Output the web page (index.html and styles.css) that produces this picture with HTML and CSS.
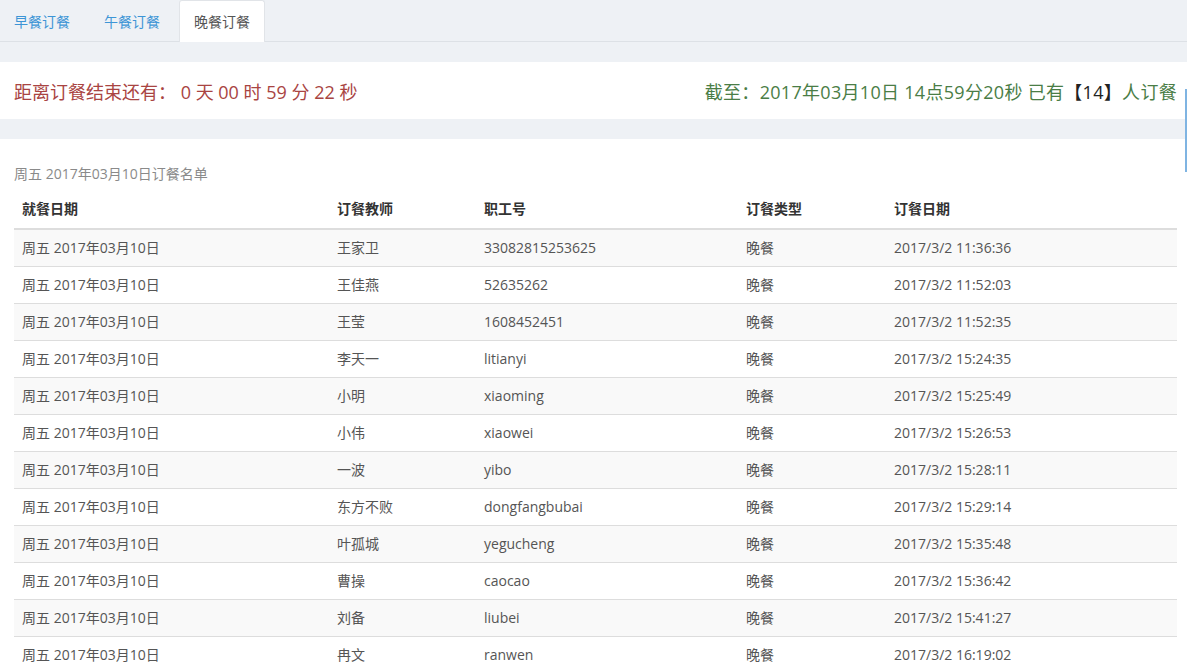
FILE: index.html
```html
<!DOCTYPE html>
<html lang="zh-CN">
<head>
<meta charset="utf-8">
<title>订餐名单</title>
<link rel="stylesheet" href="styles.css">
</head>
<body>
<ul class="tabs">
  <li class="tab"><a href="#">早餐订餐</a></li>
  <li class="tab"><a href="#">午餐订餐</a></li>
  <li class="tab active"><a href="#">晚餐订餐</a></li>
</ul>
<div class="countdown">
  <div class="remain">距离订餐结束还有： 0 天 00 时 59 分 22 秒</div>
  <div class="status">截至：2017年03月10日 14点59分20秒 已有<span class="count">【14】</span>人订餐</div>
</div>
<div class="panel">
  <div class="caption">周五 2017年03月10日订餐名单</div>
  <table class="list">
    <thead>
      <tr><th class="c1">就餐日期</th><th class="c2">订餐教师</th><th class="c3">职工号</th><th class="c4">订餐类型</th><th class="c5">订餐日期</th></tr>
    </thead>
    <tbody>
      <tr><td>周五 2017年03月10日</td><td>王家卫</td><td>33082815253625</td><td>晚餐</td><td>2017/3/2 11:36:36</td></tr>
      <tr><td>周五 2017年03月10日</td><td>王佳燕</td><td>52635262</td><td>晚餐</td><td>2017/3/2 11:52:03</td></tr>
      <tr><td>周五 2017年03月10日</td><td>王莹</td><td>1608452451</td><td>晚餐</td><td>2017/3/2 11:52:35</td></tr>
      <tr><td>周五 2017年03月10日</td><td>李天一</td><td>litianyi</td><td>晚餐</td><td>2017/3/2 15:24:35</td></tr>
      <tr><td>周五 2017年03月10日</td><td>小明</td><td>xiaoming</td><td>晚餐</td><td>2017/3/2 15:25:49</td></tr>
      <tr><td>周五 2017年03月10日</td><td>小伟</td><td>xiaowei</td><td>晚餐</td><td>2017/3/2 15:26:53</td></tr>
      <tr><td>周五 2017年03月10日</td><td>一波</td><td>yibo</td><td>晚餐</td><td>2017/3/2 15:28:11</td></tr>
      <tr><td>周五 2017年03月10日</td><td>东方不败</td><td>dongfangbubai</td><td>晚餐</td><td>2017/3/2 15:29:14</td></tr>
      <tr><td>周五 2017年03月10日</td><td>叶孤城</td><td>yegucheng</td><td>晚餐</td><td>2017/3/2 15:35:48</td></tr>
      <tr><td>周五 2017年03月10日</td><td>曹操</td><td>caocao</td><td>晚餐</td><td>2017/3/2 15:36:42</td></tr>
      <tr><td>周五 2017年03月10日</td><td>刘备</td><td>liubei</td><td>晚餐</td><td>2017/3/2 15:41:27</td></tr>
      <tr><td>周五 2017年03月10日</td><td>冉文</td><td>ranwen</td><td>晚餐</td><td>2017/3/2 16:19:02</td></tr>
    </tbody>
  </table>
</div>
<div class="edge-bar"></div>
</body>
</html>
```
FILE: styles.css
```css
html, body {
  margin: 0;
  padding: 0;
}
body {
  background: #eef1f5;
  font-family: "Open Sans", "Noto Sans CJK SC", sans-serif;
  font-size: 14px;
  color: #555;
  overflow: hidden;
  position: relative;
  height: 671px;
}
.tabs {
  list-style: none;
  margin: 0 0 0 -1px;
  padding: 0;
  display: flex;
  height: 41px;
  border-bottom: 1px solid #dde1e6;
  background: #eef1f5;
}
.tab {
  margin-right: 4px;
  margin-bottom: -1px;
}
.tab a {
  display: block;
  padding: 0 14px;
  height: 40px;
  line-height: 42px;
  border: 1px solid transparent;
  border-bottom: 0;
  border-radius: 3px 3px 0 0;
  color: #3d95d6;
  text-decoration: none;
}
.tab.active a {
  background: #fff;
  border-color: #e1e4e8;
  color: #555;
  height: 41px;
}
.countdown {
  margin-top: 20px;
  background: #fff;
  height: 57px;
  display: flex;
  align-items: center;
  justify-content: space-between;
  padding: 0 10px 0 14px;
  font-size: 18px;
}
.remain {
  color: #a94442;
}
.status {
  color: #4a7d46;
  letter-spacing: 0.3px;
}
.count {
  color: #222;
}
.panel {
  margin-top: 20px;
  background: #fff;
  padding: 25px 10px 0 14px;
  min-height: 600px;
}
.caption {
  font-size: 14px;
  color: #8a8a8a;
  line-height: 20px;
  margin-bottom: 7px;
}
.list {
  width: 1163px;
  border-collapse: collapse;
  table-layout: fixed;
}
.list th, .list td {
  text-align: left;
  padding: 8px 8px;
  line-height: 20px;
  white-space: nowrap;
}
.list th {
  color: #333;
  font-weight: 700;
  border-bottom: 2px solid #dddddd;
  padding-top: 8px;
  padding-bottom: 9px;
}
.list td {
  border-top: 1px solid #dddddd;
}
.list tbody tr:nth-child(odd) td {
  background: #f9f9f9;
}
.c1 { width: 299px; }
.c2 { width: 131px; }
.c3 { width: 246px; }
.c4 { width: 132px; }
.c5 { width: auto; }
.edge-bar {
  position: absolute;
  right: 0;
  top: 89px;
  width: 2px;
  height: 83px;
  background: #7fb4e2;
}
```
